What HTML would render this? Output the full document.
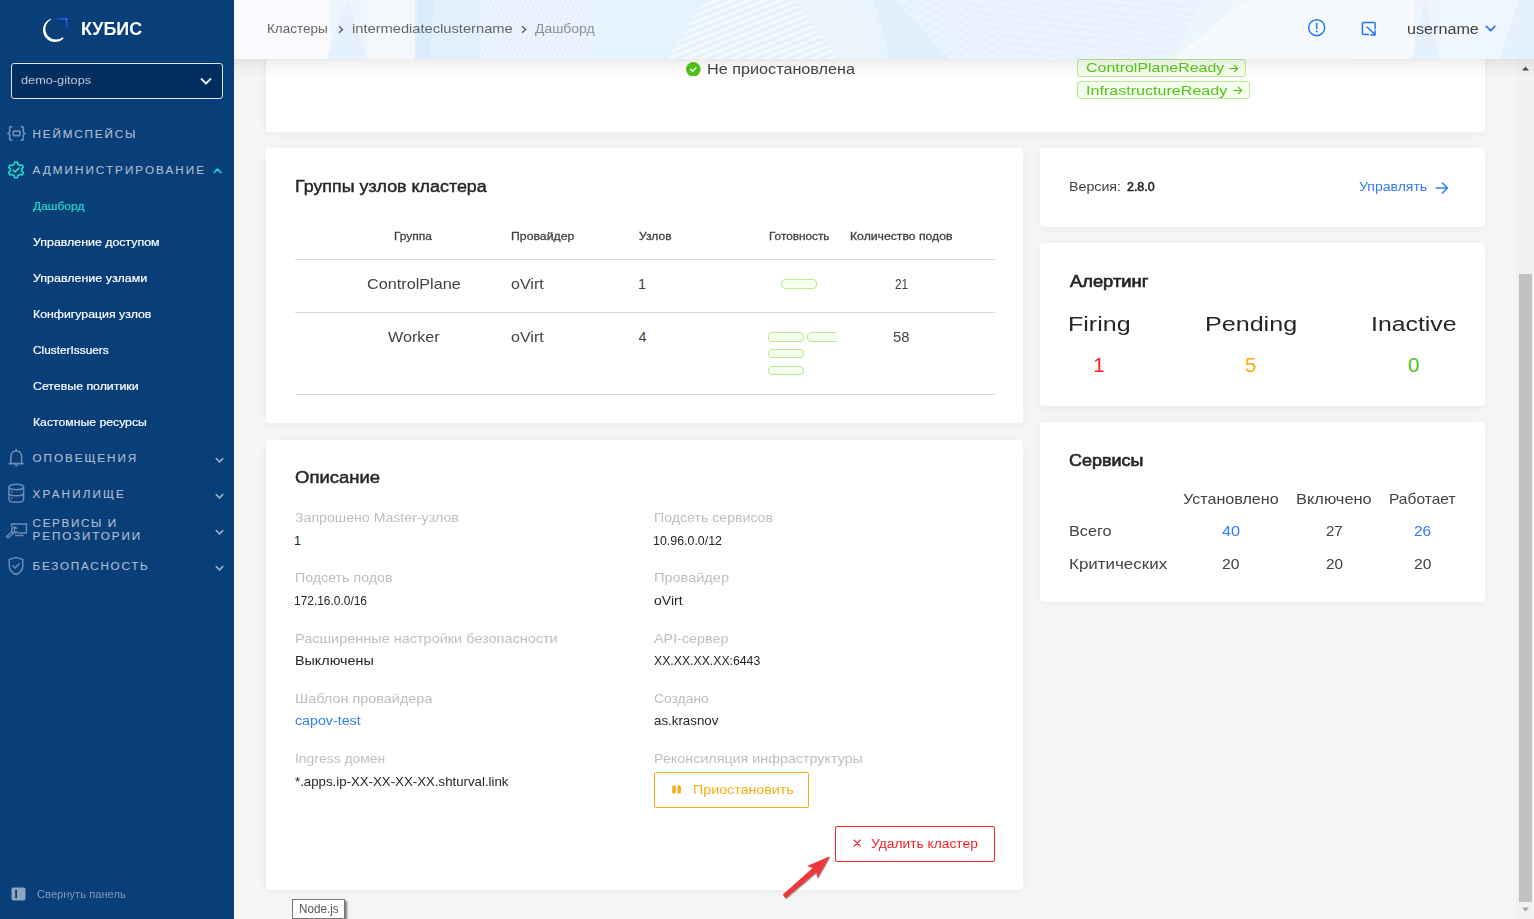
<!DOCTYPE html>
<html lang="ru">
<head>
<meta charset="utf-8">
<title>КУБИС — Дашборд</title>
<style>
*{box-sizing:border-box;margin:0;padding:0}
html,body{width:1534px;height:919px;overflow:hidden;background:#f5f5f5;font-family:"Liberation Sans",sans-serif}
.abs{position:absolute}
.t{position:absolute;white-space:nowrap;line-height:1;transform-origin:0 50%;font-family:"Liberation Sans",sans-serif}
#sidebar{position:absolute;left:0;top:0;width:234px;height:919px;background:#083f79;z-index:5}
#header{position:absolute;left:234px;top:0;width:1300px;height:58.5px;z-index:4;background:#f3f8fd;overflow:hidden}
#hshadow{position:absolute;left:234px;top:58.5px;width:1300px;height:20px;z-index:4;background:linear-gradient(to bottom,rgba(0,0,0,.075) 0%,rgba(0,0,0,.04) 30%,rgba(0,0,0,.015) 65%,rgba(0,0,0,0) 100%)}
#content{position:absolute;left:234px;top:0;width:1283px;height:919px;z-index:1}
.card{position:absolute;background:#fff;border-radius:4px;box-shadow:0 2px 10px rgba(0,0,0,.045)}
.hr{position:absolute;height:1px;background:#d9d9d9;left:295px;width:700px}
.pill{position:absolute;width:36px;height:10px;border:1px solid #b7eb8f;background:#f6ffed;border-radius:4px}
.tag{position:absolute;border:1px solid #b7eb8f;background:#f6ffed;border-radius:3px}
#shapes{position:absolute;left:0;top:0;width:1534px;height:919px;z-index:3;pointer-events:none}
#textlayer{position:absolute;left:0;top:0;width:1534px;height:919px;z-index:6;pointer-events:none}
#toplayer{position:absolute;left:0;top:0;width:1534px;height:919px;z-index:7;pointer-events:none}
#scroll{position:absolute;left:1517px;top:58.5px;width:17px;height:860.5px;background:#f1f1f1;z-index:2}
</style>
</head>
<body>
<!-- ================= CONTENT (cards & shapes) ================= -->
<main id="content">
  <section class="card" style="left:32px;top:-20px;width:1219px;height:151.5px"></section>
  <section class="card" style="left:32px;top:148px;width:756.5px;height:274.5px"></section>
  <section class="card" style="left:32px;top:440px;width:756.5px;height:450px"></section>
  <section class="card" style="left:806px;top:148px;width:445px;height:78.5px"></section>
  <section class="card" style="left:806px;top:243px;width:445px;height:162.5px"></section>
  <section class="card" style="left:806px;top:422px;width:445px;height:180px"></section>
</main>
<div id="scroll">
  <div class="abs" style="left:2px;top:215.5px;width:13px;height:628px;background:#c1c1c1"></div>
  <svg class="abs" style="left:0;top:0" width="17" height="17" viewBox="0 0 17 17"><path d="M5 11.5 L8.5 7.5 L12 11.5 Z" fill="#505050"/></svg>
  <svg class="abs" style="left:0;top:843.5px" width="17" height="17" viewBox="0 0 17 17"><path d="M5 5.5 L8.5 9.5 L12 5.5 Z" fill="#a3a3a3"/></svg>
</div>
<div id="shapes">
  <!-- table lines -->
  <div class="hr" style="top:259px"></div>
  <div class="hr" style="top:312px"></div>
  <div class="hr" style="top:394px"></div>
  <!-- readiness pills -->
  <div class="pill" style="left:781px;top:279px"></div>
  <div class="pill" style="left:768px;top:332px"></div>
  <div class="abs" style="left:807px;top:332px;width:30px;height:10px;overflow:hidden"><div class="pill" style="left:0;top:0"></div></div>
  <div class="pill" style="left:768px;top:348.9px;height:9.2px"></div>
  <div class="pill" style="left:768px;top:366px;height:9px"></div>
  <!-- status check -->
  <svg class="abs" style="left:686.2px;top:61.7px" width="14.6" height="14.6" viewBox="0 0 14.6 14.6"><circle cx="7.3" cy="7.3" r="7.3" fill="#52c41a"/><path d="M4.6 7.3 L6.6 9.3 L10 5.6" fill="none" stroke="#fff" stroke-width="1.35" stroke-linecap="round" stroke-linejoin="round"/></svg>
  <!-- tags -->
  <div class="tag" style="left:1077px;top:58.6px;width:169.2px;height:18px"></div>
  <div class="tag" style="left:1077px;top:81px;width:173.2px;height:17.9px"></div>
  <svg class="abs" style="left:1228.6px;top:63.9px" width="10" height="9" viewBox="0 0 10 9"><path d="M.8 4.5 H8.6 M5.3 1.2 L8.6 4.5 L5.3 7.8" fill="none" stroke="#52c41a" stroke-width="1.15" stroke-linecap="round" stroke-linejoin="round"/></svg>
  <svg class="abs" style="left:1233.4px;top:85.8px" width="10" height="9" viewBox="0 0 10 9"><path d="M.8 4.5 H8.6 M5.3 1.2 L8.6 4.5 L5.3 7.8" fill="none" stroke="#52c41a" stroke-width="1.15" stroke-linecap="round" stroke-linejoin="round"/></svg>
  <!-- "manage" arrow -->
  <svg class="abs" style="left:1435px;top:181px" width="14" height="14" viewBox="0 0 14 14"><path d="M1 7 H12.5 M7.5 2 L12.5 7 L7.5 12" fill="none" stroke="#2f7df6" stroke-width="1.5" stroke-linecap="round" stroke-linejoin="round"/></svg>
  <!-- buttons -->
  <div class="abs" style="left:654px;top:772.1px;width:154.8px;height:35.6px;border:1px solid #faad14;border-radius:2px;background:#fff"></div>
  <svg class="abs" style="left:672px;top:784.7px" width="10" height="9" viewBox="0 0 10 9"><rect x="0.2" y="0.3" width="3.5" height="8.2" rx="1.5" fill="#faad14"/><rect x="5.4" y="0.3" width="3.5" height="8.2" rx="1.5" fill="#faad14"/></svg>
  <div class="abs" style="left:835.1px;top:826.1px;width:159.8px;height:35.7px;border:1px solid #f5222d;border-radius:2px;background:#fff"></div>
  <svg class="abs" style="left:852.6px;top:839.4px" width="9" height="9" viewBox="0 0 9 9"><path d="M1 1 L7.4 7.4 M7.4 1 L1 7.4" stroke="#f5222d" stroke-width="1.1" stroke-linecap="round"/></svg>
  <!-- tooltip -->
  <div class="abs" style="left:292px;top:899px;width:53px;height:19.6px;border:1px solid #767676;background:#fff;box-shadow:2px 2px 2px rgba(0,0,0,.5)"></div>
</div>
<div id="textlayer">
<span class="t" style="left:80.90px;top:20px;font-size:18.7px;font-weight:700;color:#ffffff;transform:scaleX(0.9563);">КУБИС</span>
<span class="t" style="left:20.90px;top:75px;font-size:11.8px;color:#bcc8d7;transform:scaleX(1.0800);">demo-gitops</span>
<span class="t" style="left:32.60px;top:128px;font-size:11.7px;color:#afbed2;letter-spacing:1.833px;-webkit-text-stroke:0.12px;">НЕЙМСПЕЙСЫ</span>
<span class="t" style="left:32.60px;top:164px;font-size:11.7px;color:#afbed2;letter-spacing:2.031px;-webkit-text-stroke:0.12px;">АДМИНИСТРИРОВАНИЕ</span>
<span class="t" style="left:32.63px;top:200px;font-size:11.7px;color:#1fd6c4;transform:scaleX(1.0288);-webkit-text-stroke:0.2px;">Дашборд</span>
<span class="t" style="left:32.50px;top:236px;font-size:11.7px;color:#ffffff;transform:scaleX(1.0583);-webkit-text-stroke:0.2px;">Управление доступом</span>
<span class="t" style="left:32.50px;top:272px;font-size:11.7px;color:#ffffff;transform:scaleX(1.0654);-webkit-text-stroke:0.2px;">Управление узлами</span>
<span class="t" style="left:32.50px;top:308px;font-size:11.7px;color:#ffffff;transform:scaleX(1.0531);-webkit-text-stroke:0.2px;">Конфигурация узлов</span>
<span class="t" style="left:32.50px;top:344px;font-size:11.7px;color:#ffffff;transform:scaleX(1.0133);-webkit-text-stroke:0.2px;">ClusterIssuers</span>
<span class="t" style="left:32.50px;top:380px;font-size:11.7px;color:#ffffff;transform:scaleX(1.0550);-webkit-text-stroke:0.2px;">Сетевые политики</span>
<span class="t" style="left:32.50px;top:416px;font-size:11.7px;color:#ffffff;transform:scaleX(1.0459);-webkit-text-stroke:0.2px;">Кастомные ресурсы</span>
<span class="t" style="left:32.60px;top:452px;font-size:11.7px;color:#afbed2;letter-spacing:1.933px;-webkit-text-stroke:0.12px;">ОПОВЕЩЕНИЯ</span>
<span class="t" style="left:32.60px;top:488px;font-size:11.7px;color:#afbed2;letter-spacing:2.125px;-webkit-text-stroke:0.12px;">ХРАНИЛИЩЕ</span>
<span class="t" style="left:32.60px;top:517px;font-size:11.7px;color:#afbed2;letter-spacing:1.625px;-webkit-text-stroke:0.12px;">СЕРВИСЫ И</span>
<span class="t" style="left:32.60px;top:530px;font-size:11.7px;color:#afbed2;letter-spacing:1.860px;-webkit-text-stroke:0.12px;">РЕПОЗИТОРИИ</span>
<span class="t" style="left:32.60px;top:560px;font-size:11.7px;color:#afbed2;letter-spacing:1.745px;-webkit-text-stroke:0.12px;">БЕЗОПАСНОСТЬ</span>
<span class="t" style="left:37.30px;top:889px;font-size:10.8px;color:#7f99bb;transform:scaleX(1.0360);">Свернуть панель</span>
<span class="t" style="left:267.20px;top:22px;font-size:13px;color:#666666;transform:scaleX(1.0390);">Кластеры</span>
<span class="t" style="left:351.70px;top:22px;font-size:13px;color:#666666;transform:scaleX(1.1289);">intermediateclustername</span>
<span class="t" style="left:535.37px;top:22px;font-size:13px;color:#8f8f8f;transform:scaleX(1.0702);">Дашборд</span>
<span class="t" style="left:1407.40px;top:21px;font-size:15.3px;color:#434343;transform:scaleX(1.0559);">username</span>
<span class="t" style="left:707.00px;top:62px;font-size:14.4px;color:#434343;transform:scaleX(1.1258);">Не приостановлена</span>
<span class="t" style="left:1085.50px;top:61px;font-size:13.6px;color:#52c41a;transform:scaleX(1.1729);">ControlPlaneReady</span>
<span class="t" style="left:1086.10px;top:84px;font-size:13.6px;color:#52c41a;transform:scaleX(1.1833);">InfrastructureReady</span>
<span class="t" style="left:295.00px;top:178px;font-size:17.1px;color:#262626;transform:scaleX(1.0462);-webkit-text-stroke:0.45px;">Группы узлов кластера</span>
<span class="t" style="left:394.35px;top:231px;font-size:11.5px;color:#434343;transform:scaleX(1.0405);-webkit-text-stroke:0.3px;">Группа</span>
<span class="t" style="left:511.00px;top:231px;font-size:11.5px;color:#434343;transform:scaleX(1.0667);-webkit-text-stroke:0.3px;">Провайдер</span>
<span class="t" style="left:639.00px;top:231px;font-size:11.5px;color:#434343;transform:scaleX(1.0484);-webkit-text-stroke:0.3px;">Узлов</span>
<span class="t" style="left:768.80px;top:231px;font-size:11.5px;color:#434343;transform:scaleX(1.0254);-webkit-text-stroke:0.3px;">Готовность</span>
<span class="t" style="left:850.30px;top:231px;font-size:11.5px;color:#434343;transform:scaleX(1.0619);-webkit-text-stroke:0.3px;">Количество подов</span>
<span class="t" style="left:366.85px;top:277px;font-size:14.4px;color:#434343;transform:scaleX(1.1265);">ControlPlane</span>
<span class="t" style="left:510.70px;top:277px;font-size:14.4px;color:#434343;transform:scaleX(1.1167);">oVirt</span>
<span class="t" style="left:638.00px;top:277px;font-size:14.4px;color:#434343;">1</span>
<span class="t" style="left:894.60px;top:277px;font-size:14.4px;color:#434343;transform:scaleX(0.8250);">21</span>
<span class="t" style="left:387.85px;top:330px;font-size:14.4px;color:#434343;transform:scaleX(1.1196);">Worker</span>
<span class="t" style="left:510.70px;top:330px;font-size:14.4px;color:#434343;transform:scaleX(1.1167);">oVirt</span>
<span class="t" style="left:638.60px;top:330px;font-size:14.4px;color:#434343;">4</span>
<span class="t" style="left:892.75px;top:330px;font-size:14.4px;color:#434343;transform:scaleX(1.0312);">58</span>
<span class="t" style="left:295.20px;top:469px;font-size:17.1px;color:#262626;transform:scaleX(1.0823);-webkit-text-stroke:0.45px;">Описание</span>
<span class="t" style="left:295.00px;top:512px;font-size:12.6px;color:#bfbfbf;transform:scaleX(1.1233);">Запрошено Master-узлов</span>
<span class="t" style="left:294.00px;top:535px;font-size:12.6px;color:#262626;">1</span>
<span class="t" style="left:295.00px;top:572px;font-size:12.6px;color:#bfbfbf;transform:scaleX(1.1279);">Подсеть подов</span>
<span class="t" style="left:294.05px;top:595px;font-size:12.6px;color:#262626;transform:scaleX(0.9474);">172.16.0.0/16</span>
<span class="t" style="left:295.00px;top:633px;font-size:12.6px;color:#bfbfbf;transform:scaleX(1.1491);">Расширенные настройки безопасности</span>
<span class="t" style="left:295.00px;top:655px;font-size:12.6px;color:#262626;transform:scaleX(1.1377);">Выключены</span>
<span class="t" style="left:295.00px;top:693px;font-size:12.6px;color:#bfbfbf;transform:scaleX(1.1458);">Шаблон провайдера</span>
<span class="t" style="left:295.00px;top:715px;font-size:12.6px;color:#2f7df6;transform:scaleX(1.1293);">capov-test</span>
<span class="t" style="left:295.00px;top:753px;font-size:12.6px;color:#bfbfbf;transform:scaleX(1.1037);">Ingress домен</span>
<span class="t" style="left:295.00px;top:776px;font-size:12.6px;color:#262626;transform:scaleX(1.0517);">*.apps.ip-XX-XX-XX-XX.shturval.link</span>
<span class="t" style="left:653.50px;top:512px;font-size:12.6px;color:#bfbfbf;transform:scaleX(1.1226);">Подсеть сервисов</span>
<span class="t" style="left:652.51px;top:535px;font-size:12.6px;color:#262626;transform:scaleX(0.9855);">10.96.0.0/12</span>
<span class="t" style="left:653.50px;top:572px;font-size:12.6px;color:#bfbfbf;transform:scaleX(1.1538);">Провайдер</span>
<span class="t" style="left:653.50px;top:595px;font-size:12.6px;color:#262626;transform:scaleX(1.1154);">oVirt</span>
<span class="t" style="left:653.50px;top:633px;font-size:12.6px;color:#bfbfbf;transform:scaleX(1.1385);">API-сервер</span>
<span class="t" style="left:653.50px;top:655px;font-size:12.6px;color:#262626;transform:scaleX(0.9725);">XX.XX.XX.XX:6443</span>
<span class="t" style="left:653.50px;top:693px;font-size:12.6px;color:#bfbfbf;transform:scaleX(1.1000);">Создано</span>
<span class="t" style="left:653.50px;top:715px;font-size:12.6px;color:#262626;transform:scaleX(1.0574);">as.krasnov</span>
<span class="t" style="left:653.50px;top:753px;font-size:12.6px;color:#bfbfbf;transform:scaleX(1.1359);">Реконсиляция инфраструктуры</span>
<span class="t" style="left:692.60px;top:784px;font-size:12.6px;color:#faad14;transform:scaleX(1.1315);">Приостановить</span>
<span class="t" style="left:871.40px;top:838px;font-size:12.6px;color:#f5222d;transform:scaleX(1.0959);">Удалить кластер</span>
<span class="t" style="left:1069.00px;top:181px;font-size:12.6px;color:#434343;transform:scaleX(1.1289);">Версия:</span>
<span class="t" style="left:1127.30px;top:181px;font-size:12.6px;color:#262626;transform:scaleX(0.9862);-webkit-text-stroke:0.55px;">2.8.0</span>
<span class="t" style="left:1358.80px;top:181px;font-size:12.6px;color:#2f7df6;transform:scaleX(1.1148);">Управлять</span>
<span class="t" style="left:1069.93px;top:273px;font-size:16.2px;color:#262626;transform:scaleX(1.1324);-webkit-text-stroke:0.65px;">Алертинг</span>
<span class="t" style="left:1068.38px;top:314px;font-size:20.5px;color:#262626;transform:scaleX(1.2200);">Firing</span>
<span class="t" style="left:1204.58px;top:314px;font-size:20.5px;color:#262626;transform:scaleX(1.2243);">Pending</span>
<span class="t" style="left:1370.59px;top:314px;font-size:20.5px;color:#262626;transform:scaleX(1.2116);">Inactive</span>
<span class="t" style="left:1093.20px;top:355px;font-size:20.5px;color:#f5222d;">1</span>
<span class="t" style="left:1245.10px;top:355px;font-size:20.5px;color:#faad14;">5</span>
<span class="t" style="left:1408.00px;top:355px;font-size:20.5px;color:#52c41a;">0</span>
<span class="t" style="left:1068.90px;top:452px;font-size:16.2px;color:#262626;transform:scaleX(1.1075);-webkit-text-stroke:0.65px;">Сервисы</span>
<span class="t" style="left:1182.70px;top:492px;font-size:14.4px;color:#434343;transform:scaleX(1.1198);">Установлено</span>
<span class="t" style="left:1296.00px;top:492px;font-size:14.4px;color:#434343;transform:scaleX(1.1403);">Включено</span>
<span class="t" style="left:1389.00px;top:492px;font-size:14.4px;color:#434343;transform:scaleX(1.0806);">Работает</span>
<span class="t" style="left:1068.60px;top:524px;font-size:14.4px;color:#434343;transform:scaleX(1.1263);">Всего</span>
<span class="t" style="left:1068.60px;top:557px;font-size:14.4px;color:#434343;transform:scaleX(1.1783);">Критических</span>
<span class="t" style="left:1221.90px;top:524px;font-size:14.4px;color:#2f7df6;transform:scaleX(1.1375);">40</span>
<span class="t" style="left:1325.85px;top:524px;font-size:14.4px;color:#434343;transform:scaleX(1.0437);">27</span>
<span class="t" style="left:1414.15px;top:524px;font-size:14.4px;color:#2f7df6;transform:scaleX(1.0688);">26</span>
<span class="t" style="left:1222.05px;top:557px;font-size:14.4px;color:#434343;transform:scaleX(1.0938);">20</span>
<span class="t" style="left:1325.50px;top:557px;font-size:14.4px;color:#434343;transform:scaleX(1.0625);">20</span>
<span class="t" style="left:1413.80px;top:557px;font-size:14.4px;color:#434343;transform:scaleX(1.0875);">20</span>
<span class="t" style="left:298.60px;top:903px;font-size:12.2px;color:#575757;transform:scaleX(0.9585);">Node.js</span>
</div>
<!-- ================= HEADER ================= -->
<div id="hshadow"></div>
<header id="header">
  <svg class="abs" style="left:0;top:0" width="1300" height="59" viewBox="0 0 1300 59" preserveAspectRatio="none">
    <defs>
      <pattern id="st1" width="4.4" height="4.4" patternUnits="userSpaceOnUse" patternTransform="rotate(-62)"><rect width="4.4" height="1.6" fill="#ffffff" opacity=".35"/></pattern>
      <pattern id="st2" width="6" height="6" patternUnits="userSpaceOnUse" patternTransform="rotate(-22)"><rect width="6" height="2.6" fill="#ffffff" opacity=".6"/></pattern>
      <pattern id="st3" width="7" height="7" patternUnits="userSpaceOnUse" patternTransform="rotate(6)"><rect width="7" height="1.2" fill="#ffffff" opacity=".45"/></pattern>
      <pattern id="st4" width="7" height="7" patternUnits="userSpaceOnUse" patternTransform="rotate(-30)"><rect width="7" height="1.2" fill="#ffffff" opacity=".5"/></pattern>
    </defs>
    <rect width="1300" height="59" fill="#edf6fd"/>
    <rect x="0" y="0" width="96" height="59" fill="#f8fafe"/>
    <polygon points="93,59 113,0 133,59" fill="#e5f2fd"/>
    <rect x="133" y="0" width="48" height="59" fill="#f4f9fe"/>
    <polygon points="181,59 181,0 246,0 246,59" fill="#e2f0fc"/>
    <polygon points="181,59 185,0 200,0 196,59" fill="#daecfb"/>
    <rect x="246" y="0" width="107" height="59" fill="#e4f1fd"/>
    <rect x="246" y="0" width="107" height="59" fill="url(#st1)"/>
    <rect x="353" y="0" width="80" height="59" fill="#e8f4fd"/>
    <polygon points="433,59 433,0 560,0 606,59" fill="#e6f2fd"/>
    <polygon points="433,59 470,0 560,0 606,59" fill="url(#st2)"/>
    <polygon points="606,59 560,0 640,0 655,59" fill="#eaf4fd"/>
    <polygon points="655,59 640,0 660,0 716,59" fill="#e0effc"/>
    <polygon points="716,59 660,0 966,0 940,59" fill="#e6f2fd"/>
    <polygon points="716,59 660,0 730,0 790,59" fill="url(#st4)"/>
    <polygon points="790,59 730,0 966,0 940,59" fill="url(#st3)"/>
    <polygon points="940,59 1010,0 1130,0 1121,59" fill="#f5f9fe"/>
    <polygon points="940,59 1010,0 1060,0 1000,59" fill="url(#st4)"/>
    <rect x="1121" y="0" width="60" height="59" fill="#f6fafe"/>
    <polygon points="1177,59 1191,0 1206,59" fill="#e5f2fd"/>
    <rect x="1206" y="0" width="94" height="59" fill="#f1f7fe"/>
    <polygon points="1265,59 1285,0 1300,0 1300,59" fill="#e5f2fd"/>
  </svg>
  <!-- breadcrumb chevrons -->
  <svg class="abs" style="left:103px;top:24.5px" width="8" height="9" viewBox="0 0 8 9"><path d="M2 1.2 L5.6 4.5 L2 7.8" fill="none" stroke="#595959" stroke-width="1.3"/></svg>
  <svg class="abs" style="left:285.5px;top:24.5px" width="8" height="9" viewBox="0 0 8 9"><path d="M2 1.2 L5.6 4.5 L2 7.8" fill="none" stroke="#595959" stroke-width="1.3"/></svg>
  <!-- alert icon -->
  <svg class="abs" style="left:1073px;top:18.2px" width="20" height="20" viewBox="0 0 20 20"><circle cx="9.7" cy="9.7" r="8" fill="none" stroke="#1a76f2" stroke-width="1.45"/><path d="M9.7 5.4 V10.6" stroke="#1a76f2" stroke-width="1.45" stroke-linecap="round"/><circle cx="9.7" cy="13.5" r=".95" fill="#1a76f2"/></svg>
  <!-- export icon -->
  <svg class="abs" style="left:1126px;top:19.6px" width="18" height="18" viewBox="0 0 18 18"><path d="M15.1 8.8 V3.6 Q15.1 2.4 13.9 2.4 H3.6 Q2.4 2.4 2.4 3.6 V13.3 Q2.4 14.5 3.6 14.5 H8.6" fill="none" stroke="#1a76f2" stroke-width="1.45" stroke-linecap="round"/><path d="M7 7 L14.8 14.6 M15.1 10.8 V14.9 H10.8" fill="none" stroke="#1a76f2" stroke-width="1.45" stroke-linecap="round" stroke-linejoin="round"/></svg>
  <!-- user chevron -->
  <svg class="abs" style="left:1250.5px;top:25.2px" width="12" height="8" viewBox="0 0 12 8"><path d="M1.4 1.4 L5.6 5.6 L9.8 1.4" fill="none" stroke="#1a76f2" stroke-width="1.6" stroke-linecap="round" stroke-linejoin="round"/></svg>
</header>
<!-- ================= SIDEBAR ================= -->
<nav id="sidebar">
  <!-- logo -->
  <svg class="abs" style="left:41px;top:16px" width="28" height="28" viewBox="0 0 28 28">
    <defs>
      <linearGradient id="lgh" x1="0" y1="0" x2="1" y2="0"><stop offset="0" stop-color="#2f62ff" stop-opacity="0"/><stop offset=".6" stop-color="#2f62ff" stop-opacity=".9"/><stop offset="1" stop-color="#3a6bff"/></linearGradient>
      <linearGradient id="lgv" x1="0" y1="0" x2="0" y2="1"><stop offset="0" stop-color="#3a6bff"/><stop offset=".45" stop-color="#2f62ff" stop-opacity=".85"/><stop offset="1" stop-color="#2f62ff" stop-opacity="0"/></linearGradient>
      <clipPath id="lgc"><polygon points="14,14 29,28.5 -2,30 -2,-2 7.5,-4"/></clipPath>
    </defs>
    <path clip-path="url(#lgc)" fill="#ffffff" fill-rule="evenodd" d="M2 14 a12 12 0 1 0 24 0 a12 12 0 1 0 -24 0 Z M4.4 13 a10.6 10.6 0 1 0 21.2 0 a10.6 10.6 0 1 0 -21.2 0 Z"/>
    <rect x="12.5" y="2.2" width="13.8" height="1.4" fill="url(#lgh)"/>
    <rect x="24.9" y="2.2" width="1.4" height="12.6" fill="url(#lgv)"/>
  </svg>
  <!-- select -->
  <div class="abs" style="left:11px;top:63px;width:211.5px;height:35.5px;border:1px solid #dbe3ec;border-radius:3px;background:#042e5f"></div>
  <svg class="abs" style="left:199.5px;top:76.5px" width="12" height="9" viewBox="0 0 12 9"><path d="M1.5 2 L6 6.5 L10.5 2" fill="none" stroke="#e8eef5" stroke-width="1.8" stroke-linecap="round" stroke-linejoin="round"/></svg>
  <!-- namespaces icon -->
  <svg class="abs" style="left:6px;top:125px" width="21" height="17" viewBox="0 0 21 17"><path d="M5.6 1.6 Q3.7 1.6 3.7 3.6 V6.2 Q3.7 8 1.6 8.4 Q3.7 8.8 3.7 10.6 V13.2 Q3.7 15.2 5.6 15.2 M15.4 1.6 Q17.3 1.6 17.3 3.6 V6.2 Q17.3 8 19.4 8.4 Q17.3 8.8 17.3 10.6 V13.2 Q17.3 15.2 15.4 15.2" fill="none" stroke="#6d8bb2" stroke-width="1.7" stroke-linecap="round"/><rect x="7.3" y="6.2" width="6.6" height="4.4" rx=".6" fill="none" stroke="#6d8bb2" stroke-width="1.7"/></svg>
  <!-- admin icon -->
  <svg class="abs" style="left:7px;top:160.8px" width="18" height="18" viewBox="0 0 18 18"><path d="M7.25 3.26 L7.49 1.25 L10.51 1.25 L10.75 3.26 L13.09 4.61 L14.96 3.82 L16.47 6.43 L14.85 7.65 L14.85 10.35 L16.47 11.57 L14.96 14.18 L13.09 13.39 L10.75 14.74 L10.51 16.75 L7.49 16.75 L7.25 14.74 L4.91 13.39 L3.04 14.18 L1.53 11.57 L3.15 10.35 L3.15 7.65 L1.53 6.43 L3.04 3.82 L4.91 4.61 Z" fill="none" stroke="#1be3cf" stroke-width="1.5" stroke-linejoin="round"/><path d="M6.2 9.1 L8.1 10.9 L11.9 7.1" fill="none" stroke="#1be3cf" stroke-width="1.5" stroke-linecap="round" stroke-linejoin="round"/></svg>
  <svg class="abs" style="left:213px;top:166.5px" width="9" height="7" viewBox="0 0 9 7"><path d="M1.2 5.5 L4.5 2 L7.8 5.5" fill="none" stroke="#1be3cf" stroke-width="1.5" stroke-linecap="round" stroke-linejoin="round"/></svg>
  <!-- bell -->
  <svg class="abs" style="left:8px;top:448px" width="17" height="20" viewBox="0 0 17 20"><path d="M2.9 15.4 V9 Q2.9 3 8.25 3 Q13.6 3 13.6 9 V15.4 M1.3 15.6 H15.2" fill="none" stroke="#6d8bb2" stroke-width="1.6" stroke-linecap="round" stroke-linejoin="round"/><path d="M5.9 16.4 L8.25 18.8 L10.6 16.4 Z" fill="#6d8bb2"/><circle cx="8.25" cy="1.7" r="1" fill="#6d8bb2"/></svg>
  <!-- database -->
  <svg class="abs" style="left:7px;top:483px" width="19" height="21" viewBox="0 0 19 21"><ellipse cx="9.3" cy="4" rx="7.3" ry="2.8" fill="none" stroke="#6d8bb2" stroke-width="1.5"/><path d="M2 4 V16.4 Q2 19.2 9.3 19.2 Q16.6 19.2 16.6 16.4 V4 M2 10 Q2 12.8 9.3 12.8 Q16.6 12.8 16.6 10" fill="none" stroke="#6d8bb2" stroke-width="1.5"/><circle cx="4.8" cy="8.9" r=".85" fill="#6d8bb2"/><circle cx="4.8" cy="15.2" r=".85" fill="#6d8bb2"/></svg>
  <!-- services -->
  <svg class="abs" style="left:5px;top:522px" width="23" height="18" viewBox="0 0 23 18"><path d="M6.6 4.6 V2 H21.4 V11 H13.4 M10.8 13.5 H17.8" fill="none" stroke="#6d8bb2" stroke-width="1.4" stroke-linecap="square" stroke-linejoin="miter"/><path d="M11.6 6.2 A2.9 2.9 0 1 0 12 9.6 L10.2 9.9 L8.9 8.6 L9.6 6.9 Z" fill="none" stroke="#6d8bb2" stroke-width="1.3" stroke-linejoin="round"/><path d="M7 9.4 L1.6 14.4 L3 16 L8.6 11" fill="none" stroke="#6d8bb2" stroke-width="1.3" stroke-linejoin="round" stroke-linecap="round"/></svg>
  <!-- shield -->
  <svg class="abs" style="left:7px;top:556px" width="18" height="20" viewBox="0 0 18 20"><path d="M9 1.4 L15.8 3.6 V9.4 Q15.8 15.6 9 18.5 Q2.2 15.6 2.2 9.4 V3.6 Z" fill="none" stroke="#6d8bb2" stroke-width="1.5" stroke-linejoin="round"/><path d="M5.9 9.9 L8.1 12 L12.2 7.7" fill="none" stroke="#6d8bb2" stroke-width="1.5" stroke-linecap="round" stroke-linejoin="round"/></svg>
  <!-- chevrons down -->
  <svg class="abs" style="left:215px;top:456.5px" width="9" height="7" viewBox="0 0 9 7"><path d="M1.2 1.5 L4.5 5 L7.8 1.5" fill="none" stroke="#a9b9cd" stroke-width="1.5" stroke-linecap="round" stroke-linejoin="round"/></svg>
  <svg class="abs" style="left:215px;top:492.5px" width="9" height="7" viewBox="0 0 9 7"><path d="M1.2 1.5 L4.5 5 L7.8 1.5" fill="none" stroke="#a9b9cd" stroke-width="1.5" stroke-linecap="round" stroke-linejoin="round"/></svg>
  <svg class="abs" style="left:215px;top:528.5px" width="9" height="7" viewBox="0 0 9 7"><path d="M1.2 1.5 L4.5 5 L7.8 1.5" fill="none" stroke="#a9b9cd" stroke-width="1.5" stroke-linecap="round" stroke-linejoin="round"/></svg>
  <svg class="abs" style="left:215px;top:564.5px" width="9" height="7" viewBox="0 0 9 7"><path d="M1.2 1.5 L4.5 5 L7.8 1.5" fill="none" stroke="#a9b9cd" stroke-width="1.5" stroke-linecap="round" stroke-linejoin="round"/></svg>
  <!-- collapse icon -->
  <svg class="abs" style="left:10.5px;top:886.5px" width="15" height="14" viewBox="0 0 15 14"><rect x=".5" y=".5" width="14" height="13" rx="2" fill="#8ea5c1"/><rect x="4.2" y="2.8" width="1.8" height="8.4" fill="#083f79"/></svg>
</nav>
<!-- ================= OVERLAYS ================= -->
<div id="toplayer">
  <svg class="abs" style="left:770px;top:845px" width="75" height="65" viewBox="0 0 75 65">
    <defs><filter id="ash" x="-20%" y="-20%" width="150%" height="150%"><feDropShadow dx=".7" dy=".9" stdDeviation=".6" flood-color="#000" flood-opacity=".5"/></filter></defs>
    <path d="M59.8 11.3 L37.1 20.9 L43.1 22.6 L12.9 49.5 L15.4 53.2 L46.3 27.2 L47.4 33.1 Z" fill="#ee393b" filter="url(#ash)"/>
  </svg>
</div>
</body>
</html>
